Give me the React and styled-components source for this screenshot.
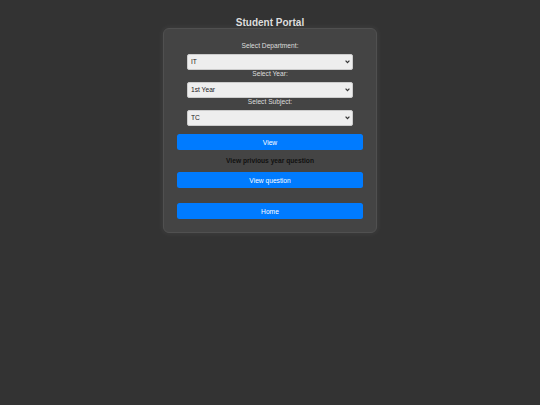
import styled, {createGlobalStyle} from "styled-components";

const GlobalStyle = createGlobalStyle`
  html, body {
    margin: 0;
    padding: 0;
    background: #333333;
  }
  body {
    font-family: "Liberation Sans", Arial, sans-serif;
  }
`

const Page = styled.div`
  min-height: 405px;
  display: flex;
  flex-direction: column;
  align-items: center;
  padding-top: 16.5px;
  box-sizing: border-box;
`

const Title = styled.h1`
  margin: 0;
  font-size: 10px;
  line-height: 11px;
  font-weight: 700;
  color: #dddddd;
`

const Card = styled.div`
  width: 214px;
  box-sizing: border-box;
  padding: 13px 13px 13px;
  background: #444444;
  border: 1px solid #505050;
  border-radius: 6px;
  box-shadow: 0 0 6px rgba(255, 255, 255, 0.08);
  text-align: center;
`

const Label = styled.label`
  display: block;
  font-size: 6.67px;
  line-height: 8px;
  color: #dddddd;
  margin-bottom: 4px;
`

const SelectWrap = styled.div`
  position: relative;
  width: 166px;
  height: 16px;
  margin: 0 auto;
`

const Select = styled.select`
  display: block;
  width: 100%;
  height: 100%;
  margin: 0;
  padding: 0 3px;
  box-sizing: border-box;
  appearance: none;
  -webkit-appearance: none;
  font-family: "Liberation Sans", Arial, sans-serif;
  font-size: 6.67px;
  color: #222222;
  background: #eeeeee;
  border: 1px solid #cccccc;
  border-radius: 2px;
  outline: none;
`

const Chevron = styled.svg`
  position: absolute;
  right: 3px;
  top: 6.5px;
  width: 5px;
  height: 3.5px;
  pointer-events: none;
`

const Button = styled.button`
  display: block;
  width: 100%;
  height: 16px;
  margin-top: ${p => p.$top}px;
  padding: 0;
  border: none;
  border-radius: 2.5px;
  background: #007bff;
  color: #ffffff;
  font-family: "Liberation Sans", Arial, sans-serif;
  font-size: 6.67px;
  cursor: pointer;
`

const Note = styled.p`
  margin: 7px 0 0;
  font-size: 6.67px;
  line-height: 8px;
  font-weight: 700;
  color: #111111;
`

const fields = [
    {label: "Select Department:", name: "department", options: ["IT", "CS", "EXTC", "Mechanical"]},
    {label: "Select Year:", name: "year", options: ["1st Year", "2nd Year", "3rd Year", "4th Year"]},
    {label: "Select Subject:", name: "subject", options: ["TC", "DBMS", "OS", "CN"]},
]

export default function App() {
    return (
        <>
            <GlobalStyle/>
            <Page>
                <Title>Student Portal</Title>
                <Card>
                    {fields.map(f =>
                        <div key={f.name}>
                            <Label htmlFor={f.name}>{f.label}</Label>
                            <SelectWrap>
                                <Select id={f.name} name={f.name} defaultValue={f.options[0]}>
                                    {f.options.map(o => <option key={o} value={o}>{o}</option>)}
                                </Select>
                                <Chevron viewBox="0 0 5 3.5">
                                    <polyline points="0.6,0.6 2.5,2.6 4.4,0.6" fill="none" stroke="#333" strokeWidth="1.2"/>
                                </Chevron>
                            </SelectWrap>
                        </div>
                    )}
                    <Button $top={8.5}>View</Button>
                    <Note>View privious year question</Note>
                    <Button $top={7}>View question</Button>
                    <Button $top={15}>Home</Button>
                </Card>
            </Page>
        </>
    )
}
